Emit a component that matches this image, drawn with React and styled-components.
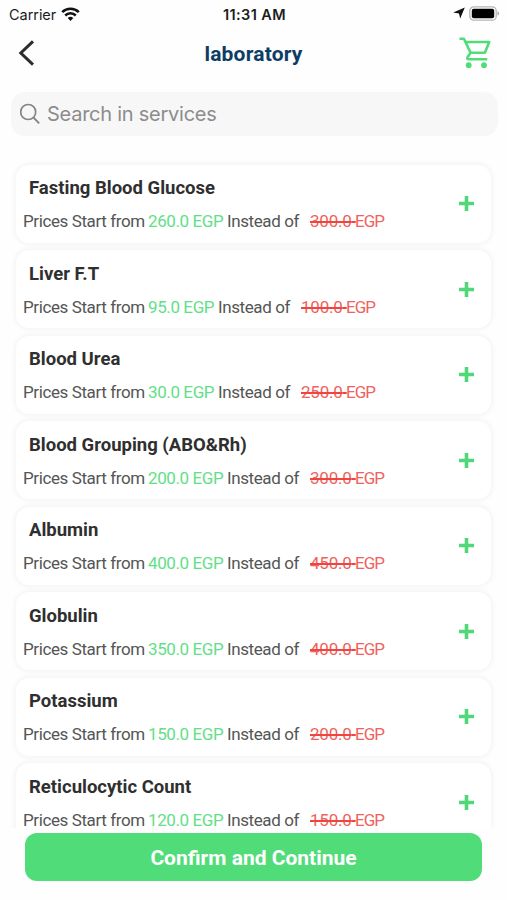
import React from 'react';
import styled, { createGlobalStyle } from 'styled-components';

const GlobalStyle = createGlobalStyle`
  * { box-sizing: border-box; }
  body {
    margin: 0;
    background: #fefefe;
    overflow: hidden;
  }
`;

const Screen = styled.div`
  width: 507px;
  height: 900px;
  display: flex;
  flex-direction: column;
  background: #fefefe;
  font-family: Roboto, "Open Sans", sans-serif;
`;

const StatusBar = styled.div`
  height: 28px;
  display: grid;
  grid-template-columns: 1fr auto 1fr;
  align-items: center;
  padding: 0 7px 0 9px;
  font-family: Inter, sans-serif;
  color: #1c1c1c;
`;

const Carrier = styled.div`
  display: flex;
  align-items: center;
  gap: 5px;
  font-size: 14.5px;
  letter-spacing: -0.05px;
`;

const Clock = styled.div`
  font-size: 14.5px;
  font-weight: 600;
  letter-spacing: 0.4px;
`;

const Indicators = styled.div`
  display: flex;
  justify-content: flex-end;
  align-items: center;
  gap: 4px;
  padding-bottom: 2px;
`;

const Header = styled.header`
  height: 50px;
  display: grid;
  grid-template-columns: 1fr auto 1fr;
  align-items: center;
  padding: 0 16px 0 16px;
`;

const IconButton = styled.button`
  display: flex;
  padding: 0;
  border: 0;
  background: none;
  color: ${props => props.$color};
  justify-self: ${props => props.$side};
`;

const PageTitle = styled.h1`
  margin: 1px 0 0;
  font-size: 21px;
  line-height: 28px;
  font-weight: 700;
  letter-spacing: 0.2px;
  color: #0d3c66;
`;

const SearchBox = styled.div`
  height: 44px;
  margin: 14px 9px 0 11px;
  padding: 0 9px;
  display: flex;
  align-items: center;
  gap: 6px;
  flex-shrink: 0;
  border-radius: 14px;
  background: #f7f7f7;
  font-family: Inter, sans-serif;
  font-size: 20px;
  letter-spacing: -0.25px;
  color: #8c8c8c;
`;

const List = styled.div`
  height: 692px;
  padding: 28.5px 16px 0;
  display: flex;
  flex-direction: column;
  gap: 7.5px;
  overflow: hidden;
`;

const Card = styled.div`
  height: 78px;
  flex-shrink: 0;
  display: flex;
  align-items: center;
  justify-content: space-between;
  padding: 0 17px 0 7px;
  border-radius: 13px;
  background: #fff;
  box-shadow: 0 0 4px 2px rgba(0, 0, 0, 0.04);
`;

const ServiceName = styled.h2`
  margin: 2px 0 9px 6px;
  font-size: 18.5px;
  line-height: 24px;
  font-weight: 700;
  color: #2f2f2f;
`;

const PriceLine = styled.div`
  display: flex;
  font-size: 17px;
  line-height: 24px;
  white-space: pre;
  color: #555;
`;

const Label = styled.span`
  width: ${props => props.$width}px;
  letter-spacing: -0.4px;
`;

const Price = styled.span`
  width: ${props => (props.$short ? 70 : 79)}px;
  letter-spacing: -0.4px;
  color: #62e087;
`;

const OldPrice = styled.span`
  width: 45px;
  letter-spacing: -0.2px;
  color: #f0625d;
  text-decoration: line-through;
  text-decoration-color: #f0443e;
  text-decoration-thickness: 1.5px;
`;

const Currency = styled.span`
  letter-spacing: -1px;
  color: #f0625d;
`;

const Footer = styled.footer`
  padding: 5px 25px 0;
`;

const ConfirmButton = styled.button`
  width: 100%;
  height: 48px;
  border: 0;
  padding: 2px 0 0;
  border-radius: 12px;
  background: #50dc78;
  color: #fff;
  font-family: inherit;
  font-size: 21px;
  font-weight: 700;
`;

const services = [
  { name: 'Fasting Blood Glucose', price: '260.0', old: '300.0' },
  { name: 'Liver F.T', price: '95.0', old: '100.0' },
  { name: 'Blood Urea', price: '30.0', old: '250.0' },
  { name: 'Blood Grouping (ABO&Rh)', price: '200.0', old: '300.0' },
  { name: 'Albumin', price: '400.0', old: '450.0' },
  { name: 'Globulin', price: '350.0', old: '400.0' },
  { name: 'Potassium', price: '150.0', old: '200.0' },
  { name: 'Reticulocytic Count', price: '120.0', old: '150.0' },
];

const WifiIcon = () => (
  <svg width="19" height="15" viewBox="0 0 19 15" fill="none" stroke="#111" strokeWidth="2.5">
    <path d="M1.2 5.2a11.8 11.8 0 0 1 16.6 0" />
    <path d="M4.2 8.5a7.5 7.5 0 0 1 10.6 0" />
    <path d="M6.7 11a4 4 0 0 1 5.6 0L9.5 13.9z" fill="#111" stroke="none" />
  </svg>
);

const LocationIcon = () => (
  <svg width="12" height="12" viewBox="0 0 12 12">
    <path d="M11.8.4 7.2 11.6 6 6.6.2 5.6z" fill="#111" />
  </svg>
);

const BatteryIcon = () => (
  <svg width="31" height="15" viewBox="0 0 31 15">
    <rect x="0.8" y="0.8" width="26.4" height="13.4" rx="4" fill="#fff" stroke="#b5b5b5" strokeWidth="1.3" />
    <rect x="2.8" y="2.7" width="22.4" height="9.6" rx="2" fill="#000" />
    <path d="M28.5 5.3q1.7.6 1.7 2.2t-1.7 2.2z" fill="#aaa" />
  </svg>
);

const BackIcon = () => (
  <svg width="20" height="28" viewBox="0 0 20 28" fill="none" stroke="#2d2d2d" strokeWidth="3">
    <path d="M17 2.3 4.8 14 17 25.7" />
  </svg>
);

const CartIcon = () => (
  <svg width="32" height="32" viewBox="0 0 32 32" fill="none" stroke="currentColor" strokeWidth="2.6" strokeLinejoin="round">
    <path d="M.5 1.7h4.4l6.7 14h14.3L30.2 5H6.5" />
    <path d="M11.6 15.7 8.6 20c-.8 1.5 0 2.3 1.4 2.3h18.3" />
    <circle cx="9.7" cy="28.2" r="2.9" fill="currentColor" stroke="none" />
    <circle cx="25" cy="28.2" r="2.9" fill="currentColor" stroke="none" />
  </svg>
);

const SearchIcon = () => (
  <svg width="21" height="22" viewBox="0 0 21 22" fill="none" stroke="#858585" strokeWidth="1.7">
    <circle cx="8.2" cy="9" r="7.5" />
    <path d="m13.4 14.4 5.7 6" strokeWidth="2" />
  </svg>
);

const PlusIcon = () => (
  <svg width="15" height="15" viewBox="0 0 15 15" fill="none" stroke="#50d878" strokeWidth="3.6">
    <path d="M7.5 0v15M0 7.5h15" />
  </svg>
);

const ServiceCard = ({ service }) => {
  const short = service.price.length < 5;

  return (
    <Card>
      <div>
        <ServiceName>{service.name}</ServiceName>
        <PriceLine>
          <Label $width={125}>Prices Start from </Label>
          <Price $short={short}>{service.price} EGP</Price>
          <Label $width={83}>Instead of </Label>
          <OldPrice>{service.old} </OldPrice>
          <Currency>EGP</Currency>
        </PriceLine>
      </div>
      <IconButton $color="#50d878" aria-label="Add">
        <PlusIcon />
      </IconButton>
    </Card>
  );
};

const App = () => (
  <>
    <GlobalStyle />
    <Screen>
      <StatusBar>
        <Carrier>
          Carrier
          <WifiIcon />
        </Carrier>
        <Clock>11:31 AM</Clock>
        <Indicators>
          <LocationIcon />
          <BatteryIcon />
        </Indicators>
      </StatusBar>
      <Header>
        <IconButton $color="#2d2d2d" $side="start" aria-label="Back">
          <BackIcon />
        </IconButton>
        <PageTitle>laboratory</PageTitle>
        <IconButton $color="#50dc78" $side="end" aria-label="Cart">
          <CartIcon />
        </IconButton>
      </Header>
      <SearchBox>
        <SearchIcon />
        Search in services
      </SearchBox>
      <List>
        {services.map(service => (
          <ServiceCard key={service.name} service={service} />
        ))}
      </List>
      <Footer>
        <ConfirmButton>Confirm and Continue</ConfirmButton>
      </Footer>
    </Screen>
  </>
);

export default App;
